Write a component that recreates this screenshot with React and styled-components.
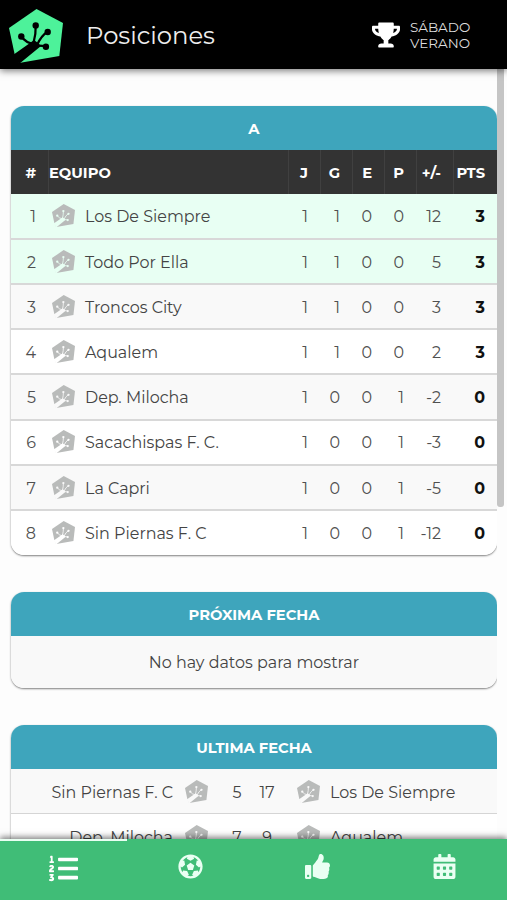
import React, { useId } from "react";
import styled, { createGlobalStyle } from "styled-components";
import {
  FaCalendarAlt,
  FaFutbol,
  FaListOl,
  FaThumbsUp,
  FaTrophy,
} from "react-icons/fa";

const GlobalStyle = createGlobalStyle`
  * {
    box-sizing: border-box;
  }

  body {
    margin: 0;
    overflow: hidden;
    background-color: #fdfdfd;
    color: #444;
    font-family: Montserrat, Inter, "Open Sans", sans-serif;
    font-size: 15.95px;
  }
`;

const Screen = styled.div`
  display: flex;
  flex-direction: column;
  height: 100vh;
`;

const Header = styled.header`
  display: flex;
  align-items: center;
  flex-shrink: 0;
  height: 69px;
  padding: 0 37px 0 9px;
  background-color: #000;
  color: #eee;
  box-shadow: 0 2px 7px rgba(0, 0, 0, 0.5);
  z-index: 2;

  > svg {
    margin-top: 3px;
  }
`;

const Title = styled.h1`
  flex: 1;
  margin: 0 0 0 23px;
  font-size: 24.3px;
  font-weight: 400;
`;

const Tournament = styled.div`
  display: flex;
  align-items: center;
  gap: 10px;
  font-size: 13.5px;
  line-height: 16px;

  svg {
    color: white;
  }
`;

const TournamentName = styled.div`
  width: 60px;
  margin-top: 1px;
  color: #ddd;
`;

const Body = styled.div`
  display: flex;
  flex: 1;
  min-height: 0;
`;

const Content = styled.main`
  flex: 1;
  min-width: 0;
  overflow: hidden;
  padding: 37px 0 0 11px;
`;

const ScrollTrack = styled.div`
  width: 10px;
  padding-right: 3px;
`;

const ScrollThumb = styled.div`
  height: 438px;
  background-color: #c5c5c5;
  border-radius: 0 0 3px 3px;
`;

const Card = styled.section`
  margin-bottom: 37px;
  overflow: hidden;
  border-radius: 13px;
  background-color: white;
  box-shadow: 0 1px 2px rgba(0, 0, 0, 0.5);
`;

const CardTitle = styled.h2`
  display: flex;
  align-items: center;
  justify-content: center;
  height: 44px;
  padding-top: 1px;
  margin: 0;
  background-color: #3ea5bc;
  color: white;
  font-size: 14.7px;
  font-weight: 700;
`;

const columns = "37px 1fr 32px 32px 32px 32px 37px 44px";

const TableHead = styled.div`
  display: grid;
  grid-template-columns: ${columns};
  height: 44px;
  background-color: #333;
  color: white;
  font-size: 14.7px;
  font-weight: 700;
`;

const HeadCell = styled.div`
  display: flex;
  align-items: center;
  justify-content: ${({ $left }) => ($left ? "flex-start" : "flex-end")};
  padding: 1px ${({ $left }) => ($left ? "0" : "12px")} 0 0;
  border-left: 1px solid ${({ $first }) => ($first ? "transparent" : "#404040")};
`;

const TableRow = styled.div`
  display: grid;
  grid-template-columns: ${columns};
  align-items: center;
  height: 45.2px;
  padding-top: 1.5px;
  border-bottom: 2px solid #d8d8d8;
  background-color: ${({ $bg }) => $bg};

  ${TableHead} + & {
    height: 45.8px;
    padding-top: 2px;
  }

  &:last-child {
    height: 44.2px;
    padding-top: 0;
    border-bottom: 0;
  }
`;

const Cell = styled.div`
  padding-right: 12px;
  text-align: right;
  color: ${({ $bold }) => ($bold ? "#111" : "#505050")};
  font-weight: ${({ $bold }) => ($bold ? 700 : 400)};
`;

const Team = styled.div`
  display: flex;
  align-items: center;
  gap: 10px;
  padding-left: 4px;

  svg {
    margin-top: -2px;
  }
`;

const Empty = styled.div`
  display: flex;
  align-items: center;
  justify-content: center;
  height: 52px;
  background-color: #f9f9f9;
`;

const MatchRow = styled.div`
  display: grid;
  grid-template-columns: 162px 49px 30px 30px 48px 1fr;
  align-items: center;
  height: 45.2px;
  padding-top: 2px;
  border-bottom: 1px solid #d5d5d5;
  background-color: ${({ $bg }) => $bg};
`;

const MatchTeam = styled.div`
  text-align: ${({ $home }) => ($home ? "right" : "left")};
`;

const MatchBadge = styled.div`
  display: flex;
  justify-content: ${({ $away }) => ($away ? "flex-end" : "flex-start")};
  padding: ${({ $away }) => ($away ? "0 10px 1px 0" : "0 0 1px 12px")};
`;

const Score = styled.div`
  text-align: center;
`;

const Navbar = styled.nav`
  display: grid;
  grid-template-columns: repeat(4, 1fr);
  flex-shrink: 0;
  height: 61px;
  background-color: #40bd77;
  color: #eafff3;
  box-shadow: 0 -2px 6px rgba(0, 0, 0, 0.5);
  z-index: 2;
`;

const NavItem = styled.div`
  display: flex;
  align-items: center;
  justify-content: center;
  padding: 0 0 ${({ $active }) => ($active ? "4px" : "9px")} 1px;
  border-top: 2px solid ${({ $active }) => ($active ? "#e9fff2" : "transparent")};
  color: ${({ $active }) => ($active ? "#fff" : "inherit")};
`;

// pentagon with the frog foot cut out of it
const Frog = ({ size, color, toe = 3.2 }) => {
  const id = useId();

  return (
    <svg width={size} height={size} viewBox="0 0 54 54">
      <mask id={id}>
        <rect width="54" height="54" fill="white" />
        <path d="M4 46L21 34L25 31L29 34L32 37L10 55Z" fill="black" />
        <path
          d="M26.7 16.5Q27 25 24.5 34M38.7 22.5Q32 27 28 36M12.3 27.5Q17 34 25 35M36.7 37.5Q31 36 26 37"
          fill="none"
          stroke="black"
          strokeWidth={toe * 0.7}
        />
        <circle cx="26.7" cy="16.5" r={toe} fill="black" />
        <circle cx="38.7" cy="23" r={toe} fill="black" />
        <circle cx="12.3" cy="27.5" r={toe} fill="black" />
        <circle cx="36.9" cy="37.7" r={toe} fill="black" />
      </mask>
      <path
        d="M27.5 0L54 14L50.3 47L10 54L5.6 45L0 19Z"
        fill={color}
        mask={`url(#${id})`}
      />
    </svg>
  );
};

const Badge = () => <Frog size={23} color="#b9bbba" toe={2.7} />;

const standings = [
  ["Los De Siempre", 1, 1, 0, 0, 12, 3],
  ["Todo Por Ella", 1, 1, 0, 0, 5, 3],
  ["Troncos City", 1, 1, 0, 0, 3, 3],
  ["Aqualem", 1, 1, 0, 0, 2, 3],
  ["Dep. Milocha", 1, 0, 0, 1, -2, 0],
  ["Sacachispas F. C.", 1, 0, 0, 1, -3, 0],
  ["La Capri", 1, 0, 0, 1, -5, 0],
  ["Sin Piernas F. C", 1, 0, 0, 1, -12, 0],
];

const matches = [
  ["Sin Piernas F. C", 5, 17, "Los De Siempre"],
  ["Dep. Milocha", 7, 9, "Aqualem"],
];

const rowColor = (i) => {
  if (i < 2) return "#e8fff3";
  return i % 2 ? "#fff" : "#f9f9f9";
};

const App = () => {
  return (
    <Screen>
      <GlobalStyle />
      <Header>
        <Frog size={54} color="#4df29a" />
        <Title>Posiciones</Title>
        <Tournament>
          <FaTrophy size={28} />
          <TournamentName>SÁBADO VERANO</TournamentName>
        </Tournament>
      </Header>
      <Body>
        <Content>
          <Card>
            <CardTitle>A</CardTitle>
            <TableHead>
              <HeadCell $first>#</HeadCell>
              <HeadCell $left>EQUIPO</HeadCell>
              {["J", "G", "E", "P", "+/-", "PTS"].map((label) => (
                <HeadCell key={label}>{label}</HeadCell>
              ))}
            </TableHead>
            {standings.map(([name, ...values], i) => (
              <TableRow key={name} $bg={rowColor(i)}>
                <Cell>{i + 1}</Cell>
                <Team>
                  <Badge />
                  {name}
                </Team>
                {values.map((value, j) => (
                  <Cell key={j} $bold={j === 5}>
                    {value}
                  </Cell>
                ))}
              </TableRow>
            ))}
          </Card>
          <Card>
            <CardTitle>PRÓXIMA FECHA</CardTitle>
            <Empty>No hay datos para mostrar</Empty>
          </Card>
          <Card>
            <CardTitle>ULTIMA FECHA</CardTitle>
            {matches.map(([home, a, b, away], i) => (
              <MatchRow key={home} $bg={i % 2 ? "#fff" : "#f9f9f9"}>
                <MatchTeam $home>{home}</MatchTeam>
                <MatchBadge>
                  <Badge />
                </MatchBadge>
                <Score>{a}</Score>
                <Score>{b}</Score>
                <MatchBadge $away>
                  <Badge />
                </MatchBadge>
                <MatchTeam>{away}</MatchTeam>
              </MatchRow>
            ))}
          </Card>
        </Content>
        <ScrollTrack>
          <ScrollThumb />
        </ScrollTrack>
      </Body>
      <Navbar>
        <NavItem $active>
          <FaListOl size={29} />
        </NavItem>
        <NavItem>
          <FaFutbol size={25} />
        </NavItem>
        <NavItem>
          <FaThumbsUp size={25} />
        </NavItem>
        <NavItem>
          <FaCalendarAlt size={25} />
        </NavItem>
      </Navbar>
    </Screen>
  );
};

export default App;
